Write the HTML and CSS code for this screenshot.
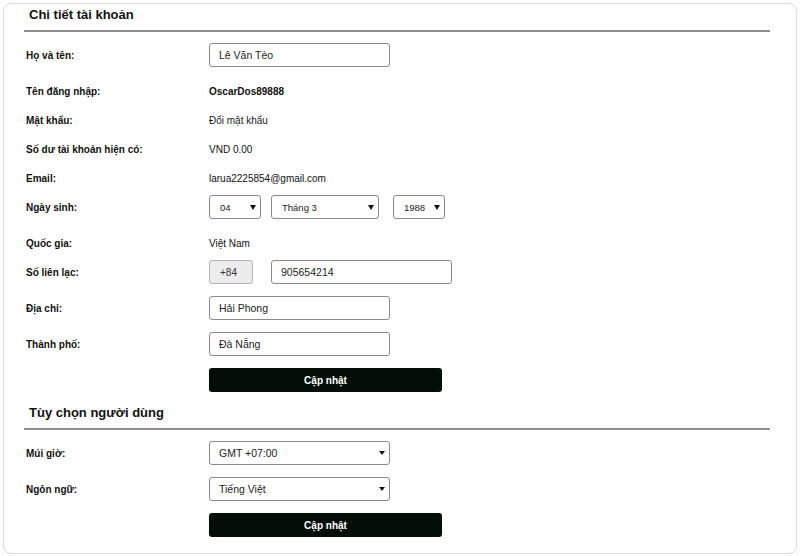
FILE: index.html
```html
<!DOCTYPE html>
<html lang="vi">
<head>
  <meta charset="UTF-8" />
  <meta name="viewport" content="width=device-width, initial-scale=1" />
  <title>Chi tiết tài khoản</title>
  <link rel="stylesheet" href="styles.css">
</head>
<body>
  <div class="panel">
    <section class="section">
      <h2>Chi tiết tài khoản</h2>
      <div class="rows">
        <div class="row">
          <label class="label">Họ và tên:</label>
          <input class="field" type="text" value="Lê Văn Tèo">
        </div>
        <div class="row plain">
          <span class="label">Tên đăng nhập:</span>
          <span class="value strong">OscarDos89888</span>
        </div>
        <div class="row plain">
          <span class="label">Mật khẩu:</span>
          <a class="value link" href="#">Đổi mật khẩu</a>
        </div>
        <div class="row plain">
          <span class="label">Số dư tài khoản hiện có:</span>
          <span class="value">VND 0.00</span>
        </div>
        <div class="row plain">
          <span class="label">Email:</span>
          <span class="value">larua2225854@gmail.com</span>
        </div>
        <div class="row">
          <span class="label">Ngày sinh:</span>
          <div class="date">
            <div class="select small day"><span>04</span><i class="caret"></i></div>
            <div class="select small month"><span>Tháng 3</span><i class="caret"></i></div>
            <div class="select small year"><span>1988</span><i class="caret"></i></div>
          </div>
        </div>
        <div class="row plain">
          <span class="label">Quốc gia:</span>
          <span class="value">Việt Nam</span>
        </div>
        <div class="row">
          <label class="label">Số liên lạc:</label>
          <div class="phone">
            <span class="prefix">+84</span>
            <input class="field" type="text" value="905654214">
          </div>
        </div>
        <div class="row">
          <label class="label">Địa chỉ:</label>
          <input class="field" type="text" value="Hải Phong">
        </div>
        <div class="row">
          <label class="label">Thành phố:</label>
          <input class="field" type="text" value="Đà Nẵng">
        </div>
        <div class="row">
          <span></span>
          <button class="btn" type="button">Cập nhật</button>
        </div>
      </div>
    </section>

    <section class="section">
      <h2>Tùy chọn người dùng</h2>
      <div class="rows">
        <div class="row">
          <label class="label">Múi giờ:</label>
          <div class="select wide"><span>GMT +07:00</span><i class="caret"></i></div>
        </div>
        <div class="row">
          <label class="label">Ngôn ngữ:</label>
          <div class="select wide"><span>Tiếng Việt</span><i class="caret"></i></div>
        </div>
        <div class="row">
          <span></span>
          <button class="btn" type="button">Cập nhật</button>
        </div>
      </div>
    </section>
  </div>
</body>
</html>
```

FILE: styles.css
```css
body {
  margin: 0;
  padding: 3px;
  font-family: "Liberation Sans", Arial, sans-serif;
  color: #111;
  background: #fff;
}

.panel {
  border: 1px solid #dcdcdc;
  border-radius: 8px;
  padding: 3px 26px 16px 20px;
}

.section + .section {
  margin-top: 13px;
}

.section h2 {
  margin: 0 0 11px;
  padding: 0 0 7px 5px;
  font-size: 13px;
  line-height: 16px;
  font-weight: bold;
  border-bottom: 2px solid #8e8e8e;
}

.rows {
  display: flex;
  flex-direction: column;
  gap: 12px;
}

.row {
  display: grid;
  grid-template-columns: 185px 1fr;
  align-items: center;
  font-size: 10px;
}

.row.plain {
  height: 17px;
  align-items: end;
  line-height: 8px;
}

.label {
  padding-left: 2px;
  font-weight: bold;
}

.value.strong {
  font-weight: bold;
}

.link {
  color: #1a1a1a;
  text-decoration: none;
}

.field {
  box-sizing: border-box;
  width: 181px;
  height: 24px;
  margin: 0;
  padding: 0 9px;
  border: 1px solid #8a8a8a;
  border-radius: 3px;
  font-family: inherit;
  font-size: 10.5px;
  color: #222;
  background: #fff;
}

/* Ngày sinh */
.date {
  display: flex;
}

.select {
  box-sizing: border-box;
  height: 24px;
  display: flex;
  align-items: center;
  justify-content: space-between;
  padding: 0 4px 0 9px;
  border: 1px solid #8a8a8a;
  border-radius: 3px;
  background: #fff;
  color: #222;
}

.select.small {
  font-size: 9.5px;
  padding-left: 10px;
}

.day, .year {
  width: 52px;
}

.month {
  width: 108px;
  margin: 0 14px 0 10px;
}

.caret {
  width: 0;
  height: 0;
  border-left: 3px solid transparent;
  border-right: 3px solid transparent;
  border-top: 5px solid #111;
}

.select.wide {
  width: 181px;
  font-size: 10.5px;
}

.select.wide .caret {
  border-left-width: 3.5px;
  border-right-width: 3.5px;
  border-top-width: 4px;
}

/* Số liên lạc */
.phone {
  display: flex;
  gap: 18px;
}

.prefix {
  box-sizing: border-box;
  width: 44px;
  height: 24px;
  display: flex;
  align-items: center;
  padding-left: 10px;
  border: 1px solid #b5b5b5;
  border-radius: 3px;
  background: #ececec;
  color: #333;
  font-size: 10px;
}

.btn {
  width: 233px;
  height: 24px;
  border: none;
  border-radius: 3px;
  background: #020e07;
  color: #fff;
  font-family: inherit;
  font-size: 10px;
  font-weight: bold;
  cursor: pointer;
}
```
